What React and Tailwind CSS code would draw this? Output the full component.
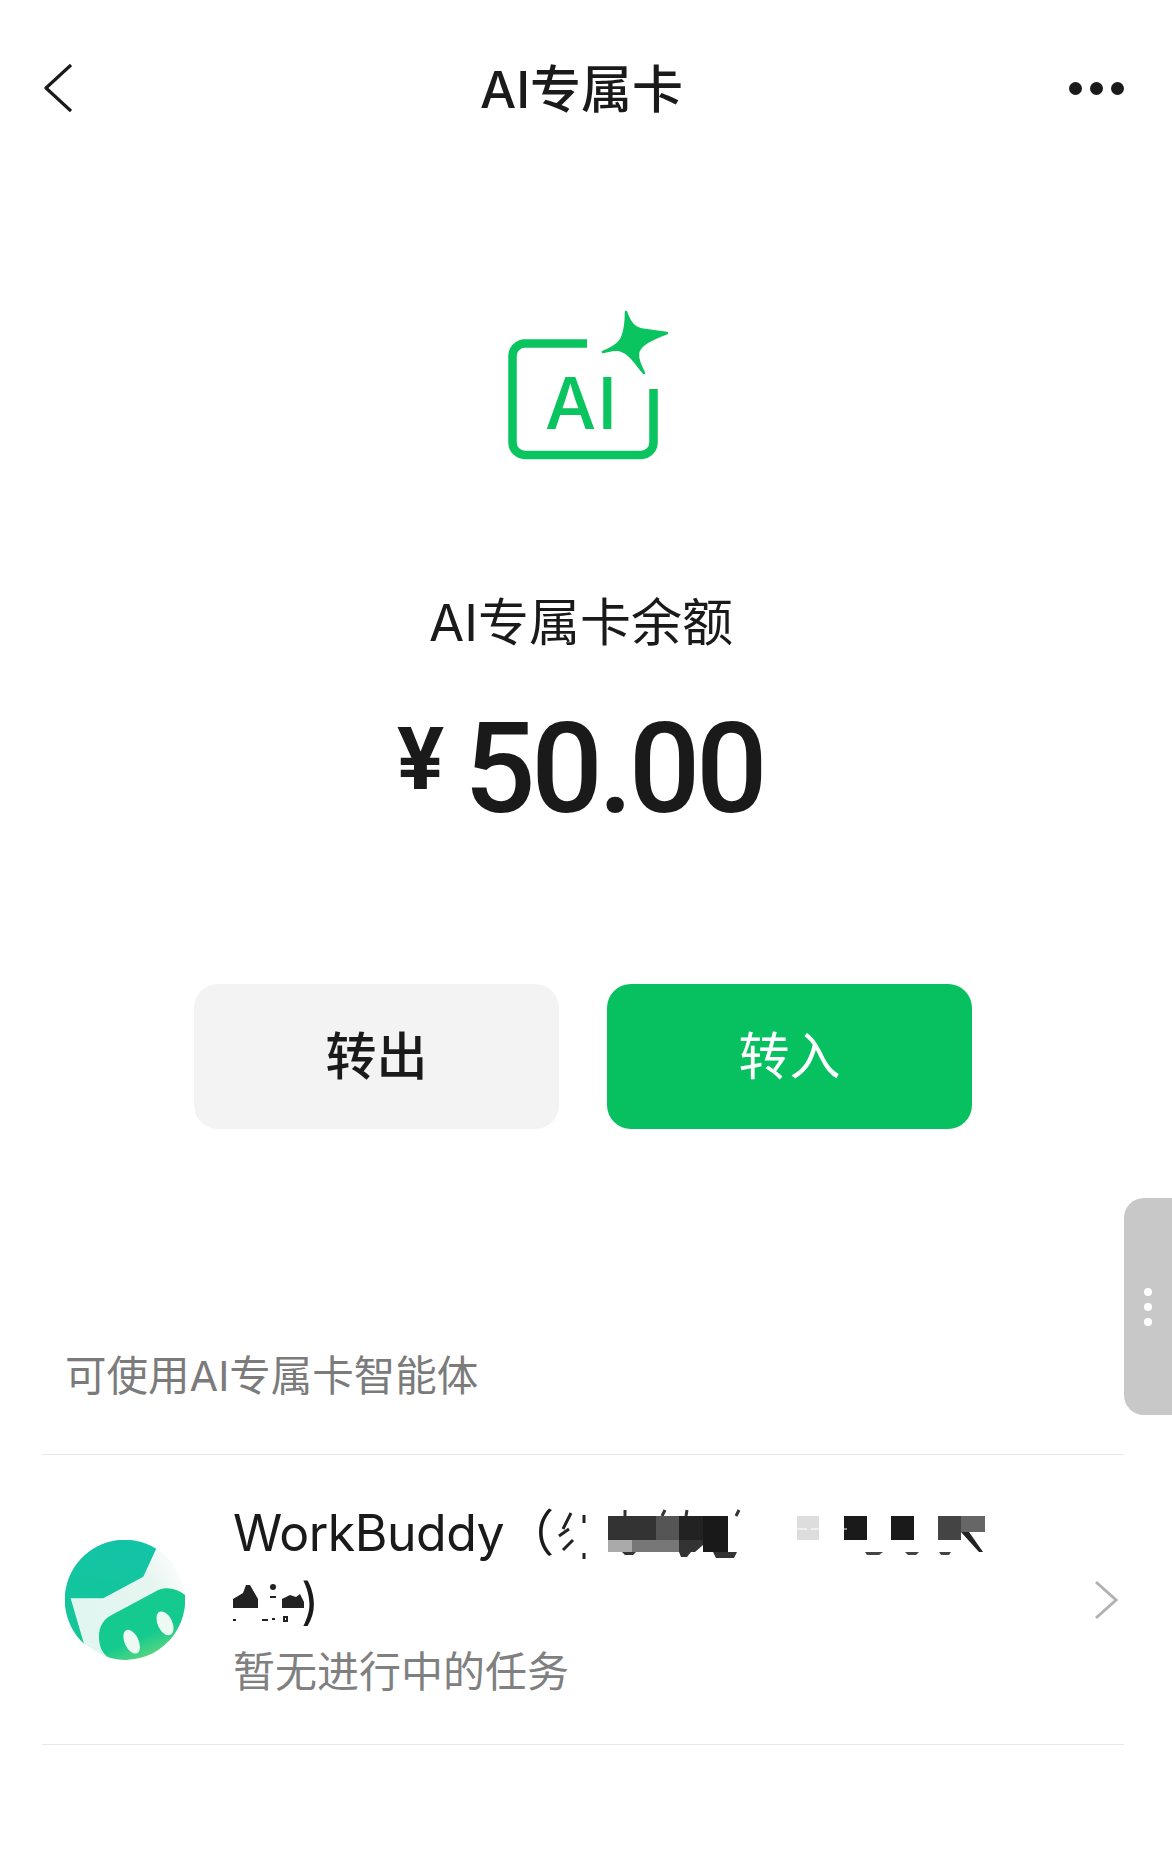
const sans = "font-['Inter','Noto_Sans_CJK_SC',sans-serif]";

function AiIcon() {
  return (
    <svg width="176" height="170" viewBox="495 300 176 170" fill="none">
      <path
        d="M587 343.5H525a12.5 12.5 0 0 0-12.5 12.5V442.5a12.5 12.5 0 0 0 12.5 12.5H641a12.5 12.5 0 0 0 12.5-12.5V389"
        stroke="#0ac45f"
        strokeWidth="8.5"
      />
      <path
        d="M626 312C630 324 635 329 645 330C652 331 660 332 667 333C655 338 640 343 638 353C637 360 641 367 644 373C637 366 632 354 620 350C614 349 608 351 603 352C610 349 620 345 623 335C626 327 626 320 626 312Z"
        fill="#0ac45f"
        stroke="#0ac45f"
        strokeWidth="2.5"
        strokeLinejoin="round"
      />
      <text
        x="545"
        y="429"
        fontFamily="Inter, sans-serif"
        fontWeight="500"
        fontSize="72"
        fill="#0ac45f"
        textLength="72"
        lengthAdjust="spacing"
      >
        AI
      </text>
    </svg>
  );
}

function BuddyLogo() {
  return (
    <svg width="120" height="120" viewBox="105 180 360 360" className="shrink-0">
      <defs>
        <linearGradient id="teal" x1="0.4" y1="0" x2="0.3" y2="1">
          <stop offset="0" stopColor="#12c4a6" />
          <stop offset="1" stopColor="#15c795" />
        </linearGradient>
        <linearGradient id="face" x1="0.1" y1="0.5" x2="0.9" y2="0.1">
          <stop offset="0" stopColor="#e2f6f1" />
          <stop offset="0.7" stopColor="#e6f5f0" />
          <stop offset="1" stopColor="#fafdfc" />
        </linearGradient>
        <linearGradient id="nose" x1="0.35" y1="0.2" x2="0.75" y2="1">
          <stop offset="0.55" stopColor="#15ca8e" />
          <stop offset="1" stopColor="#72da7c" />
        </linearGradient>
      </defs>
      <path d="M122 355L220 355L340 290L378.5 206A180 180 0 0 1 465 345L285 540L225 530L162 491.5Z" fill="url(#face)" />
      <path d="M378.5 206A180 180 0 0 0 162 491.5L122 355L220 355L340 290Z" fill="url(#teal)" />
      <path
        d="M465 345C440 325 410 320 385 330L245 405C215 420 203 450 208 485C212 512 225 530 245 535A180 180 0 0 0 465 345Z"
        fill="url(#nose)"
      />
      <ellipse cx="305" cy="485" rx="21" ry="38" transform="rotate(-25 305 485)" fill="#ecfaf3" />
      <ellipse cx="405" cy="430" rx="22" ry="38" transform="rotate(-25 405 430)" fill="#ecfaf3" />
    </svg>
  );
}

// mosaic that covers the agent name, first line
function MaskLineOne() {
  return (
    <svg width="432" height="56" viewBox="558 1510 432 56" className="mt-[8px] shrink-0">
      <path d="M574 1514L566 1530M562 1537L572 1530M566 1551L576 1541M587 1516V1524M587 1554V1560" stroke="#222" strokeWidth="3" fill="none" />
      <path d="M628 1511V1517M668 1511L665 1517M690 1511L689 1517M742 1511L739 1517" stroke="#333" strokeWidth="3" fill="none" />
      <rect x="611" y="1517" width="48" height="24" fill="#333" />
      <rect x="659" y="1517" width="23" height="24" fill="#555" />
      <rect x="682" y="1517" width="24" height="24" fill="#222" />
      <rect x="706" y="1517" width="25" height="36" fill="#191919" />
      <rect x="611" y="1541" width="24" height="12" fill="#aaa" />
      <rect x="635" y="1541" width="47" height="12" fill="#777" />
      <path d="M682 1541h24v5l-8 7h-16z" fill="#333" />
      <path d="M625 1553h14l-3 3h-8zM682 1553h12l-4 5h-6zM716 1553h24l-3 6h-18zM738 1545l-2 12" fill="#333" />
      <rect x="800" y="1517" width="22" height="24" fill="#ddd" />
      <rect x="847" y="1517" width="23" height="24" fill="#1a1a1a" />
      <rect x="894" y="1517" width="23" height="24" fill="#1a1a1a" />
      <rect x="941" y="1517" width="23" height="24" fill="#444" />
      <rect x="964" y="1517" width="24" height="16" fill="#666" />
      <path d="M964 1533h8l14 20h-4z" fill="#222" />
      <path d="M868 1553h18l-4 3h-12zM908 1553h14l-3 3h-8zM942 1553h12l-2 3h-8z" fill="#444" />
      <path d="M800 1530h50" stroke="#fff" strokeWidth="1" strokeDasharray="10 4" />
    </svg>
  );
}

// leftovers of the mosaic on the second line
function MaskLineTwo() {
  return (
    <svg width="72" height="40" viewBox="233 1586 72 40" className="mt-[4px] -mr-[4px] shrink-0">
      <path d="M233 1611V1602L243 1596L246 1588H250L258 1602V1611Z" fill="#222" />
      <circle cx="273" cy="1590" r="3" fill="#222" />
      <path d="M270 1600h6" stroke="#222" strokeWidth="2" />
      <path d="M282 1611V1602L290 1598L296 1600L300 1597L304 1605V1611Z" fill="#222" />
      <path d="M233 1623h3M262 1623h6M272 1622h3M284 1620h3v4h-3z" stroke="#222" strokeWidth="2" fill="none" />
    </svg>
  );
}

export default function App() {
  return (
    <div className={`relative min-h-[1864px] w-full overflow-hidden bg-white ${sans} text-[#1a1a1a]`}>
      {/* barra superior */}
      <header className="flex h-[176px] items-center justify-between pl-[44px] pr-[48px]">
        <svg width="28" height="50" viewBox="0 0 28 50" fill="none">
          <path d="M27 2L2 25L27 48" stroke="#1a1a1a" strokeWidth="3.2" strokeLinejoin="round" />
        </svg>
        <h1 className="pl-[22px] pt-[2px] text-[51px] font-medium leading-none">AI专属卡</h1>
        <div className="flex gap-[8px]">
          <span className="h-[13px] w-[13px] rounded-full bg-[#1a1a1a]"></span>
          <span className="h-[13px] w-[13px] rounded-full bg-[#1a1a1a]"></span>
          <span className="h-[13px] w-[13px] rounded-full bg-[#1a1a1a]"></span>
        </div>
      </header>

      {/* saldo */}
      <section className="flex flex-col items-center pr-[6px] pt-[124px]">
        <AiIcon />
        <p className="mt-[118px] pr-[4px] text-[51px] leading-[70px]">AI专属卡余额</p>
        <div className="mt-[41px] flex h-[140px] items-center pr-[6px] font-['Roboto',sans-serif] font-medium">
          <span className="mb-[20px] text-[88px] font-bold leading-none">¥</span>
          <span className="ml-[20px] text-[126px] leading-none tracking-[-4.5px]">50.00</span>
        </div>
        <div className="mt-[145px] flex gap-[48px]">
          <button className="flex h-[145px] w-[365px] items-center justify-center rounded-[24px] bg-[#f3f3f3] pt-[2px] text-[51px] font-medium">
            转出
          </button>
          <button className="flex h-[145px] w-[365px] items-center justify-center rounded-[24px] bg-[#07c160] pt-[2px] text-[51px] text-white">
            转入
          </button>
        </div>
      </section>

      {/* agentes */}
      <section className="ml-[42px] mr-[48px] mt-[217px]">
        <p className="pl-[23px] text-[41.5px] leading-[60px] text-[#7b7b7b]">可使用AI专属卡智能体</p>
        <div className="mt-[48px] flex h-[291px] items-center border-y border-[#e8e8e8] pl-[23px] pr-[6px]">
          <BuddyLogo />
          <div className="ml-[48px] min-w-0 flex-1 pt-[2px]">
            <div className="flex h-[68px] items-center text-[50px] leading-none tracking-[-0.5px]">
              <span>WorkBuddy</span>
              <span className="w-[51px]">（</span>
              <MaskLineOne />
            </div>
            <div className="flex h-[68px] items-center text-[50px] leading-none">
              <MaskLineTwo />
              <span>)</span>
            </div>
            <p className="mt-[7px] text-[42px] leading-[60px] text-[#808080]">暂无进行中的任务</p>
          </div>
          <svg width="24" height="40" viewBox="0 0 24 40" fill="none" className="shrink-0">
            <path d="M2 2L22 20L2 38" stroke="#b2b2b2" strokeWidth="3" />
          </svg>
        </div>
      </section>

      {/* asa lateral flotante */}
      <div className="absolute right-0 top-[1198px] flex h-[217px] w-[48px] flex-col items-center justify-center gap-[7px] rounded-l-[20px] bg-[#c8c8c8]">
        <span className="h-[8px] w-[8px] rounded-full bg-white"></span>
        <span className="h-[8px] w-[8px] rounded-full bg-white"></span>
        <span className="h-[8px] w-[8px] rounded-full bg-white"></span>
      </div>
    </div>
  );
}
